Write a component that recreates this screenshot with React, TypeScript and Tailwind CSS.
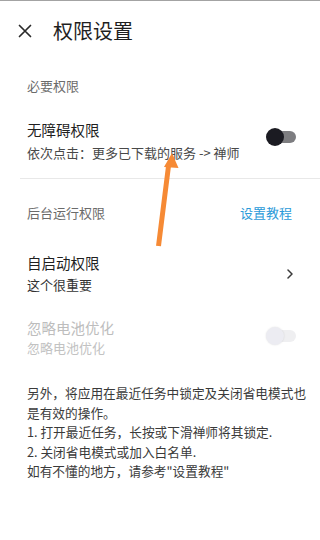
import React from 'react';

const font = { fontFamily: '"Noto Sans CJK SC", "Noto Sans", sans-serif' };

function Toggle({ on }: { on: boolean }) {
  return (
    <div className="relative h-[18px] w-[30px]">
      <div
        className={`absolute left-[4px] right-0 top-[3px] h-[12px] rounded-full ${
          on ? 'bg-[#7d7d80]' : 'bg-[#efeff1]'
        }`}
      />
      <div
        className={`absolute left-0 top-0 h-[18px] w-[18px] rounded-full ${
          on ? 'bg-[#1b1b22]' : 'bg-[#ececf2] shadow-[0_0_2px_rgba(0,0,0,0.12)]'
        }`}
      />
    </div>
  );
}

export default function App() {
  return (
    <div className="relative h-[540px] w-[320px] overflow-hidden bg-white" style={font}>
      <div className="h-px bg-[#a3a3a3]" />

      {/* Header */}
      <div className="flex h-[60px] items-center">
        <svg className="ml-[18px] h-[14px] w-[14px]" viewBox="0 0 14 14" fill="none" stroke="#2a2a2a" strokeWidth="1.7" strokeLinecap="round">
          <path d="M1.5 1.5 L12.5 12.5 M12.5 1.5 L1.5 12.5" />
        </svg>
        <span className="ml-[21px] text-[20px] leading-[24px] text-[#1f1f1f]">权限设置</span>
      </div>

      {/* 必要权限 */}
      <div className="flex h-[50px] items-center px-[27px] text-[13px] text-[#6b6b6b]">必要权限</div>

      <div className="flex items-start justify-between pl-[27px] pr-[24px] pt-[9px] pb-[15px]">
        <div>
          <div className="text-[14.5px] leading-[20px] text-[#1f1f1f]">无障碍权限</div>
          <div className="mt-[3px] text-[13px] leading-[20px] text-[#484848]">依次点击：更多已下载的服务 -&gt; 禅师</div>
        </div>
        <div className="mt-[8px]">
          <Toggle on />
        </div>
      </div>

      <div className="ml-[20px] h-px bg-[#e8e8e8]" />

      {/* 后台运行权限 */}
      <div className="flex h-[68px] items-center justify-between pl-[27px] pr-[28px] text-[13px]">
        <span className="text-[#6b6b6b]">后台运行权限</span>
        <span className="text-[#2b9ad9]">设置教程</span>
      </div>

      <div className="flex items-center justify-between pl-[27px] pr-[27px] pt-[6px]">
        <div>
          <div className="text-[14.5px] leading-[20px] text-[#1f1f1f]">自启动权限</div>
          <div className="mt-[2px] text-[13px] leading-[20px] text-[#333333]">这个很重要</div>
        </div>
        <svg className="h-[10px] w-[6px]" viewBox="0 0 6 10" fill="none" stroke="#3a3a3a" strokeWidth="1.5" strokeLinecap="round" strokeLinejoin="round">
          <path d="M1 1 L5 5 L1 9" />
        </svg>
      </div>

      <div className="mt-[23px] flex items-center justify-between pl-[27px] pr-[24px]">
        <div>
          <div className="text-[14.5px] leading-[20px] text-[#bdbdbd]">忽略电池优化</div>
          <div className="text-[13px] leading-[20px] text-[#c2c2c2]">忽略电池优化</div>
        </div>
        <div className="-mt-[4px]">
          <Toggle on={false} />
        </div>
      </div>

      {/* 说明 */}
      <div className="mt-[25px] whitespace-nowrap pl-[27px] text-[12.7px] leading-[19.5px] text-[#3a3a3a]">
        <div>另外，将应用在最近任务中锁定及关闭省电模式也</div>
        <div>是有效的操作。</div>
        <div>1. 打开最近任务，长按或下滑禅师将其锁定.</div>
        <div>2. 关闭省电模式或加入白名单.</div>
        <div>如有不懂的地方，请参考"设置教程"</div>
      </div>

      {/* annotation arrow */}
      <svg className="pointer-events-none absolute left-0 top-0" width="320" height="540" viewBox="0 0 320 540">
        <path d="M158.5 246 L168.5 166" stroke="#f68a35" strokeWidth="5" strokeLinecap="butt" fill="none" />
        <path d="M172 153 L178.5 168 L164 167 Z" fill="#f68a35" />
      </svg>
    </div>
  );
}
